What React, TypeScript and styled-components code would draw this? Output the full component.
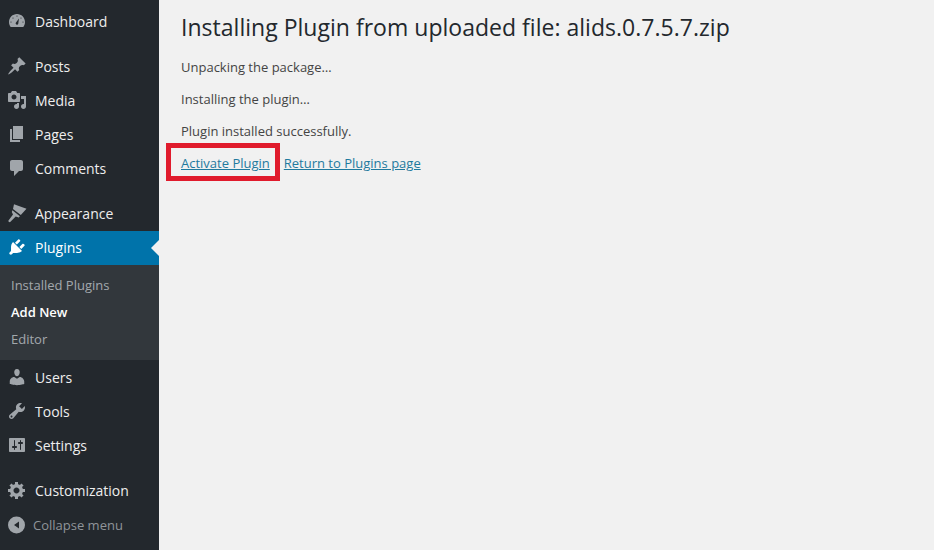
import styled, { createGlobalStyle } from 'styled-components';

const GlobalStyle = createGlobalStyle`
  html, body {
    margin: 0;
    height: 100%;
    overflow: hidden;
    background: #f1f1f1;
  }
  #root {
    height: 100%;
  }
`;

const Page = styled.div`
  display: flex;
  height: 550px;
  width: 934px;
  font-family: 'Open Sans', 'Liberation Sans', sans-serif;
  font-size: 13px;
  color: #444;
`;

const Sidebar = styled.nav`
  flex: 0 0 159px;
  display: flex;
  flex-direction: column;
  padding-top: 4px;
  background-color: #23282d;
`;

const MenuItem = styled.a<{ $active?: boolean; $gap?: boolean }>`
  position: relative;
  display: flex;
  align-items: center;
  gap: 8px;
  flex: 0 0 34px;
  box-sizing: border-box;
  padding-left: 7px;
  padding-bottom: ${(p) => (p.$active ? '2px' : '0')};
  margin-top: ${(p) => (p.$active ? '1px' : p.$gap ? '11px' : '0')};
  font-size: 14px;
  color: ${(p) => (p.$active ? '#fff' : '#eee')};
  background-color: ${(p) => (p.$active ? '#0073aa' : 'transparent')};

  svg {
    color: ${(p) => (p.$active ? '#fff' : '#a0a5aa')};
  }

  ${(p) =>
    p.$active &&
    `
    &::after {
      content: '';
      position: absolute;
      right: 0;
      top: 9px;
      border: 8px solid transparent;
      border-right-color: #f1f1f1;
      border-left-width: 0;
    }
  `}
`;

const Submenu = styled.div`
  display: flex;
  flex-direction: column;
  flex: 0 0 95px;
  padding: 6px 0;
  box-sizing: border-box;
  background-color: #32373c;
`;

const SubItem = styled.a<{ $current?: boolean }>`
  display: flex;
  align-items: center;
  flex: 0 0 27px;
  padding-left: 11px;
  font-size: 13px;
  font-weight: ${(p) => (p.$current ? 600 : 400)};
  color: ${(p) => (p.$current ? '#fff' : 'rgba(240, 245, 250, 0.6)')};
`;

const Collapse = styled.a`
  display: flex;
  align-items: center;
  gap: 6px;
  flex: 0 0 34px;
  margin-top: 1px;
  padding-left: 7px;
  font-size: 13px;
  color: #8f9499;

  svg {
    color: #a0a5aa;
  }
`;

const Content = styled.main`
  flex: 1;
  padding: 12px 0 0 22px;
  background-color: #f1f1f1;
`;

const Title = styled.h1`
  margin: 0 0 16px;
  font-size: 23px;
  font-weight: 400;
  line-height: 30px;
  letter-spacing: 0.02px;
  color: #23282d;
`;

const Line = styled.p`
  margin: 0 0 14px;
  font-size: 13px;
  line-height: 18px;
`;

const LinkRow = styled.div`
  display: flex;
  gap: 14px;
  font-size: 13px;
  line-height: 18px;
`;

const Link = styled.a<{ $marked?: boolean }>`
  position: relative;
  color: #1f7a9e;
  text-decoration: underline;

  ${(p) =>
    p.$marked &&
    `
    &::after {
      content: '';
      position: absolute;
      left: -15px;
      right: -10px;
      top: -11px;
      bottom: -9px;
      border: 5px solid #e01b2c;
    }
  `}
`;

const Icon = ({ d }: { d: string }) => (
  <svg width={20} height={20} viewBox="0 0 20 20" fill="currentColor" fillRule="evenodd" style={{ flex: 'none' }}>
    <path d={d} />
  </svg>
);

const icons = {
  dashboard:
    'M3.76 16h12.48c1.1-1.37 1.76-3.11 1.76-5 0-4.42-3.58-8-8-8s-8 3.58-8 8c0 1.89.66 3.63 1.76 5zM10 4.4a.6.6 0 1 1 0 1.2.6.6 0 0 1 0-1.2zM6 6.4a.6.6 0 1 1 0 1.2.6.6 0 0 1 0-1.2zm8 0a.6.6 0 1 1 0 1.2.6.6 0 0 1 0-1.2zM8.8 11.8L12 7.5 11.2 13a1.3 1.3 0 1 1-2.4-1.2zM4 10.4a.6.6 0 1 1 0 1.2.6.6 0 0 1 0-1.2zm12 0a.6.6 0 1 1 0 1.2.6.6 0 0 1 0-1.2z',
  posts:
    'M10.44 3.02l1.82-1.82 6.36 6.35-1.83 1.82c-1.05-.68-2.48-.57-3.41.36l-.75.75c-.92.93-1.04 2.35-.35 3.41l-1.83 1.82-2.41-2.41-2.8 2.79c-.42.42-3.38 2.71-3.8 2.29s1.86-3.39 2.28-3.81l2.79-2.79L4.1 9.36l1.83-1.82c1.05.69 2.48.57 3.4-.36l.75-.75c.93-.92 1.05-2.35.36-3.41z',
  media:
    'M13 11V4c0-.55-.45-1-1-1h-1.67L9 1H5L3.67 3H2c-.55 0-1 .45-1 1v7c0 .55.45 1 1 1h10c.55 0 1-.45 1-1zM7 4.5c1.38 0 2.5 1.12 2.5 2.5S8.38 9.5 7 9.5 4.5 8.38 4.5 7 5.62 4.5 7 4.5zM14 6h5v10.5c0 1.38-1.12 2.5-2.5 2.5S14 17.88 14 16.5s1.12-2.5 2.5-2.5c.17 0 .34.02.5.05V9h-3V6zm-4 8.05V13h2v3.5c0 1.38-1.12 2.5-2.5 2.5S7 17.88 7 16.5 8.12 14 9.5 14c.17 0 .34.02.5.05z',
  pages: 'M6 15V2h10v13H6zm-1 1h8v2H3V5h2v11z',
  comments:
    'M5 2h9c1.1 0 2 .9 2 2v7c0 1.1-.9 2-2 2h-2l-5 5v-5H5c-1.1 0-2-.9-2-2V4c0-1.1.9-2 2-2z',
  appearance:
    'M7 1.2L19.5 5.8 13.8 12 6 6zM5.4 7.2l7.5 6-1.2 1.3-3-1-5.5 5.6c-.8.6-2.4-.6-1.7-1.5l4.5-6-1.2-2.7z',
  plugins:
    'M13.11 4.36L9.87 7.6 8 5.73l3.24-3.24c.35-.34 1.05-.2 1.56.32.52.51.66 1.21.31 1.55zm-8 1.77l.91-1.12 9.01 9.01-1.19.84c-.71.71-2.63 1.16-3.82 1.16H6.14L4.9 17.26c-.59.59-1.54.59-2.12 0-.59-.58-.59-1.53 0-2.12l1.24-1.24v-3.88c0-1.13.4-3.19 1.09-3.89zm7.26 3.97l3.24-3.24c.34-.35 1.04-.21 1.55.31.52.51.66 1.21.31 1.55l-3.24 3.25z',
  users:
    'M10 9.25c-2.27 0-2.73-3.44-2.73-3.44C7 4.02 7.82 2 9.97 2c2.16 0 2.98 2.02 2.71 3.81 0 0-.41 3.44-2.68 3.44zm0 2.57L12.72 10c2.39 0 4.52 2.33 4.52 4.53v2.49s-3.65 1.13-7.24 1.13c-3.65 0-7.24-1.13-7.24-1.13v-2.49c0-2.25 1.94-4.48 4.47-4.48z',
  tools:
    'M16.68 9.77c-1.34 1.34-3.3 1.67-4.95.99l-5.41 6.52c-.99.99-2.59.99-3.58 0s-.99-2.59 0-3.57l6.52-5.42c-.68-1.65-.35-3.61.99-4.95 1.28-1.28 3.12-1.62 4.72-1.06l-2.89 2.89 2.82 2.82 2.86-2.87c.53 1.58.18 3.39-1.08 4.65zM3.81 16.21c.4.39 1.04.39 1.43 0 .4-.4.4-1.04 0-1.43-.39-.4-1.03-.4-1.43 0-.39.39-.39 1.03 0 1.43z',
  settings:
    'M18 16V4c0-.55-.45-1-1-1H3c-.55 0-1 .45-1 1v12c0 .55.45 1 1 1h14c.55 0 1-.45 1-1zM8 11h1c.55 0 1 .45 1 1s-.45 1-1 1H8v1.5c0 .28-.22.5-.5.5s-.5-.22-.5-.5V13H6c-.55 0-1-.45-1-1s.45-1 1-1h1V5.5c0-.28.22-.5.5-.5s.5.22.5.5V11zm5-2h-1c-.55 0-1-.45-1-1s.45-1 1-1h1V5.5c0-.28.22-.5.5-.5s.5.22.5.5V7h1c.55 0 1 .45 1 1s-.45 1-1 1h-1v5.5c0 .28-.22.5-.5.5s-.5-.22-.5-.5V9z',
  gear:
    'M18 12h-2.18c-.17.7-.44 1.35-.81 1.93l1.54 1.54-2.1 2.1-1.54-1.54c-.58.36-1.23.63-1.91.79V19H8v-2.18c-.68-.16-1.33-.43-1.91-.79l-1.54 1.54-2.12-2.12 1.54-1.54c-.36-.58-.63-1.23-.79-1.91H1V9.03h2.17c.16-.7.44-1.35.8-1.94L2.43 5.55l2.1-2.1 1.54 1.54c.58-.37 1.24-.64 1.93-.81V2h3v2.18c.68.16 1.33.43 1.91.79l1.54-1.54 2.12 2.12-1.54 1.54c.36.59.64 1.24.8 1.94H18V12zm-8.5 1.5c1.66 0 3-1.34 3-3s-1.34-3-3-3-3 1.34-3 3 1.34 3 3 3z',
  collapse:
    'M9.5 1.5a8.5 8.5 0 1 1 0 17 8.5 8.5 0 0 1 0-17zM12 6.5L7 10l5 3.5z',
};

export default function App() {
  return (
    <>
      <GlobalStyle />
      <Page>
        <Sidebar>
          <MenuItem><Icon d={icons.dashboard} />Dashboard</MenuItem>
          <MenuItem $gap><Icon d={icons.posts} />Posts</MenuItem>
          <MenuItem><Icon d={icons.media} />Media</MenuItem>
          <MenuItem><Icon d={icons.pages} />Pages</MenuItem>
          <MenuItem><Icon d={icons.comments} />Comments</MenuItem>
          <MenuItem $gap><Icon d={icons.appearance} />Appearance</MenuItem>
          <MenuItem $active><Icon d={icons.plugins} />Plugins</MenuItem>
          <Submenu>
            <SubItem>Installed Plugins</SubItem>
            <SubItem $current>Add New</SubItem>
            <SubItem>Editor</SubItem>
          </Submenu>
          <MenuItem><Icon d={icons.users} />Users</MenuItem>
          <MenuItem><Icon d={icons.tools} />Tools</MenuItem>
          <MenuItem><Icon d={icons.settings} />Settings</MenuItem>
          <MenuItem $gap><Icon d={icons.gear} />Customization</MenuItem>
          <Collapse><Icon d={icons.collapse} />Collapse menu</Collapse>
        </Sidebar>
        <Content>
          <Title>Installing Plugin from uploaded file: alids.0.7.5.7.zip</Title>
          <Line>Unpacking the package…</Line>
          <Line>Installing the plugin…</Line>
          <Line>Plugin installed successfully.</Line>
          <LinkRow>
            <Link $marked>Activate Plugin</Link>
            <Link>Return to Plugins page</Link>
          </LinkRow>
        </Content>
      </Page>
    </>
  );
}
